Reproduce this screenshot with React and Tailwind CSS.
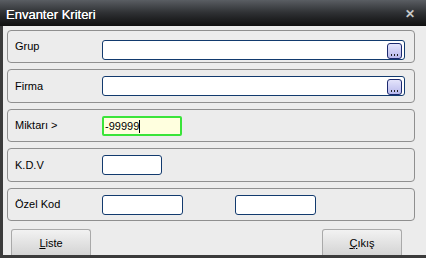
import React from "react";

const font = { fontFamily: "'Liberation Sans', Arial, sans-serif" };

const Dots = () => (
  <div className="absolute right-[2px] top-[2px] w-[15px] h-[16px] rounded-[3px] border border-[#1c2a6e] bg-gradient-to-b from-[#e4e4fb] to-[#b9b9ec] flex items-end justify-center pb-[2px] gap-[2px]">
    <span className="w-[1px] h-[2px] bg-[#222]" />
    <span className="w-[1px] h-[2px] bg-[#222]" />
    <span className="w-[1px] h-[2px] bg-[#222]" />
  </div>
);

const Panel = ({ label, children }) => (
  <div className="h-[34px] w-[408px] flex items-center rounded-[4px] border border-[#8f8f8f]">
    <span className="w-[94px] pl-[7px] text-[11px] text-black">{label}</span>
    {children}
  </div>
);

const Box = ({ w, extra = "" }) => (
  <div className={"relative h-[20px] rounded-[3px] border border-[#123a6e] bg-white " + w + " " + extra} />
);

const Btn = ({ first, rest }) => (
  <div className="w-[80px] h-[26px] rounded-t-[3px] border border-[#a9a9a9] border-b-0 bg-gradient-to-b from-[#f2f2f2] via-[#e3e3e3] to-[#d4d4d4] flex justify-center pt-[5px] text-[11px] text-black">
    <span>
      <span className="underline">{first}</span>
      {rest}
    </span>
  </div>
);

const App = () => {
  return (
    <div className="w-[426px] h-[258px] bg-[#3b3b3b] overflow-hidden flex flex-col" style={font}>
      <div className="h-[26px] shrink-0 bg-gradient-to-b from-[#5a5e63] via-[#2e3033] to-[#101010] flex items-center justify-between pl-[6px] pr-[11px]">
        <span className="text-white text-[13px] pt-[3px] [text-shadow:0_0_0.4px_#fff]">Envanter Kriteri</span>
        <span className="text-[#c9c9c9] text-[12px] font-bold leading-none pt-[1px]">✕</span>
      </div>
      <div className="flex-1 ml-[3px] mb-[3px] bg-[#ececec] pl-[4px] pt-[4px] flex flex-col gap-[6px] overflow-hidden">
        <Panel label="Grup">
          <div className="relative h-[20px] w-[303px] mt-[6px] rounded-[3px] border border-[#123a6e] bg-white">
            <Dots />
          </div>
        </Panel>
        <Panel label="Firma">
          <div className="relative h-[20px] w-[303px] rounded-[3px] border border-[#123a6e] bg-white">
            <Dots />
          </div>
        </Panel>
        <Panel label="Miktarı >">
          <div className="h-[20px] w-[80px] mt-[1px] rounded-[2px] border-2 border-[#3ae43a] bg-[#ffffdf] flex items-center pl-[1px] text-[11px] text-black">
            -99999<span className="w-[1px] h-[13px] bg-black" />
          </div>
        </Panel>
        <Panel label="K.D.V">
          <Box w="w-[60px]" extra="mt-[1px]" />
        </Panel>
        <Panel label="Özel Kod">
          <Box w="w-[81px]" extra="mt-[1px]" />
          <Box w="w-[81px]" extra="mt-[1px] ml-[52px]" />
        </Panel>
        <div className="flex justify-between w-[391px] ml-[4px] mt-[2px]">
          <Btn first="L" rest="iste" />
          <Btn first="Ç" rest="ıkış" />
        </div>
      </div>
    </div>
  );
};

export default App;
